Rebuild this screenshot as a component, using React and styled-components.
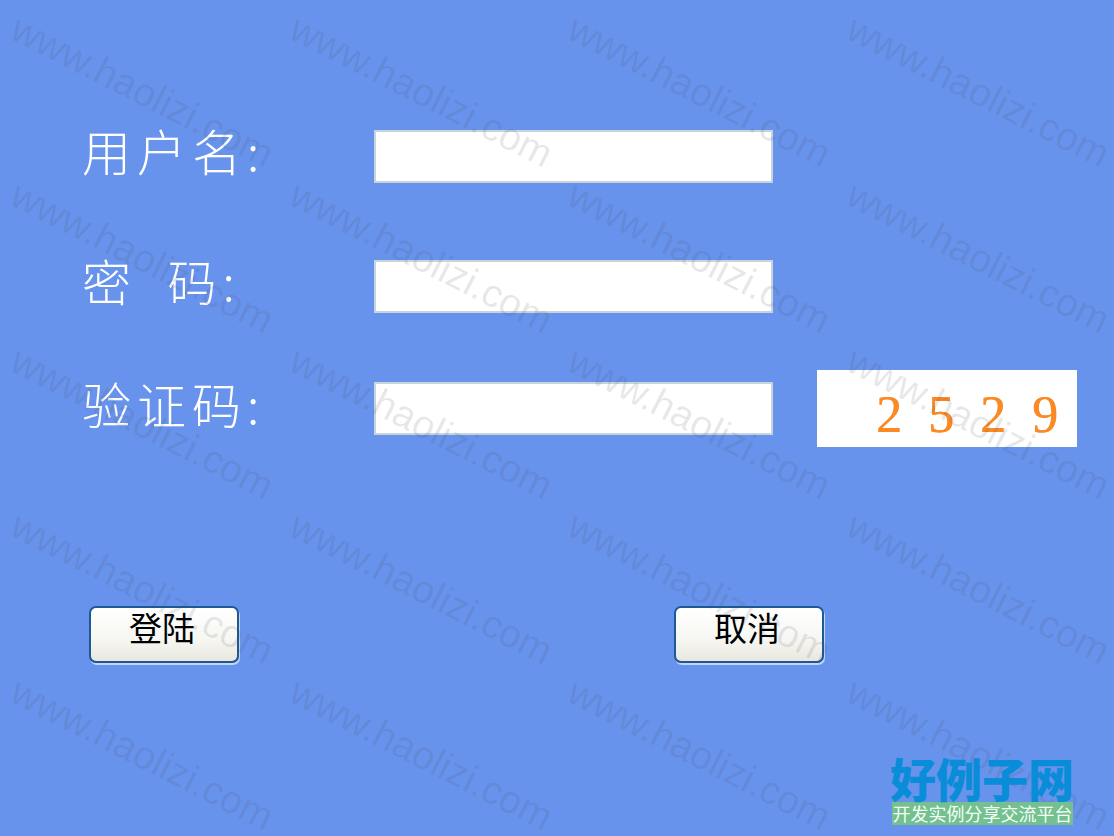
import React from "react";
import styled, { createGlobalStyle } from "styled-components";

const Global = createGlobalStyle`
  html, body { margin: 0; padding: 0; height: 100%; background: #6893ec; }
  #root { height: 100%; }
`;

const cjk = `"Noto Sans CJK SC", "Liberation Sans", sans-serif`;

const Page = styled.main`
  position: relative;
  width: 1114px;
  height: 836px;
  overflow: hidden;
  background: #6893ec;
  padding: 130px 37px 0 82px;
  box-sizing: border-box;
  font-family: ${cjk};
`;

const Row = styled.div`
  display: flex;
  align-items: center;
  height: ${(p) => p.$h}px;
  margin-bottom: ${(p) => p.$mb}px;
`;

const Label = styled.label`
  width: 292px;
  flex: none;
  color: #fff;
  font-size: 49px;
  font-weight: 300;
  line-height: 52px;
  letter-spacing: 6px;
  white-space: pre;
  transform: translateY(-6px);
`;

const Field = styled.input`
  width: 399px;
  height: 53px;
  flex: none;
  box-sizing: border-box;
  border: 2px solid #c8d4dc;
  background: #fff;
  padding: 0;
  margin-bottom: ${(p) => p.$offset ?? -1}px;
`;

const Captcha = styled.div`
  width: 260px;
  height: 77px;
  flex: none;
  margin-left: 44px;
  box-sizing: border-box;
  padding-left: 59px;
  background: #fff;
  color: #fb8a24;
  font-family: "Liberation Serif", serif;
  font-size: 52px;
  line-height: 90px;
  letter-spacing: 26px;
  white-space: nowrap;
  text-shadow: 0.4px 0 0 #fb8a24;
`;

const Actions = styled.div`
  display: flex;
  gap: 435px;
  padding-left: 7px;
`;

const Button = styled.button`
  width: 150px;
  height: 57px;
  box-sizing: border-box;
  border: 2px solid #1d5a93;
  border-radius: 7px;
  background: linear-gradient(#ffffff 0%, #f6f6f2 60%, #e9e7de 100%);
  box-shadow: 1px 2px 0 #c5d5f7;
  color: #000;
  font-family: ${cjk};
  font-size: 33px;
  line-height: 38px;
  padding: 0 4px 17px 0;
`;

const Watermarks = styled.div`
  position: absolute;
  inset: 0;
  pointer-events: none;
  display: grid;
  grid-template-columns: repeat(4, 278.5px);
  grid-auto-rows: 165.8px;
  padding: 20px 0 0 12px;
`;

const Mark = styled.span`
  font-family: "Liberation Sans", sans-serif;
  font-size: 39px;
  line-height: 1;
  color: rgba(70, 70, 80, 0.12);
  white-space: nowrap;
  transform-origin: 0 0;
  transform: translate(11px, -12px) rotate(27deg);
  height: 38px;
`;

const Logo = styled.div`
  position: absolute;
  left: 890px;
  top: 752px;
  width: 184px;
`;

const LogoTitle = styled.div`
  color: #0a8dd8;
  font-size: 46px;
  font-weight: 900;
  line-height: 50px;
  white-space: nowrap;
`;

const LogoBar = styled.div`
  margin: 0 0 0 2px;
  height: 23px;
  width: 181px;
  background: #74c08f;
  color: #f2fff6;
  font-size: 18px;
  line-height: 23px;
  white-space: nowrap;
  text-align: center;
`;

export default function App() {
  return (
    <Page>
      <Global />
      <Row $h={52} $mb={78}>
        <Label>用户名:</Label>
        <Field />
      </Row>
      <Row $h={52} $mb={58}>
        <Label>{"密\u2002码:"}</Label>
        <Field type="password" />
      </Row>
      <Row $h={77} $mb={159}>
        <Label>验证码:</Label>
        <Field $offset={0} />
        <Captcha>2529</Captcha>
      </Row>
      <Actions>
        <Button>登陆</Button>
        <Button>取消</Button>
      </Actions>
      <Watermarks>
        {Array.from({ length: 20 }, (_, i) => (
          <Mark key={i}>www.haolizi.com</Mark>
        ))}
      </Watermarks>
      <Logo>
        <LogoTitle>好例子网</LogoTitle>
        <LogoBar>开发实例分享交流平台</LogoBar>
      </Logo>
    </Page>
  );
}
